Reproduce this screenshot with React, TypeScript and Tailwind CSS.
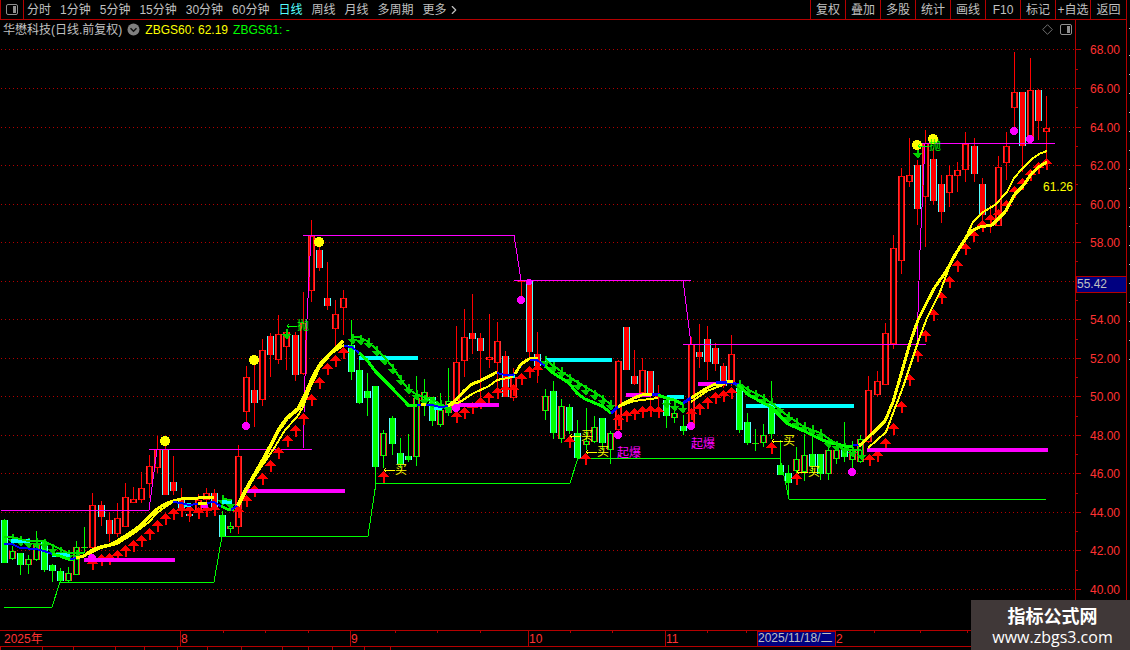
import { ChevronRight } from 'lucide-react'

type Kind = 'r' | 'c' | 'g' | 'h'
type Point = [number, number]

// high, body top, body bottom, low, kind
// r: hollow red, c: solid red, g: solid green, h: hollow green
const candles: [number, number, number, number, Kind][] = [
  [519, 520, 563, 563, 'g'], [546, 551, 559, 560, 'h'], [553, 553, 565, 575, 'g'], [555, 559, 565, 574, 'h'],
  [531, 543, 560, 561, 'h'], [540, 542, 570, 572, 'g'], [564, 565, 571, 582, 'g'], [568, 571, 581, 582, 'g'],
  [567, 573, 581, 582, 'h'], [541, 547, 575, 575, 'h'], [527, 547, 548, 553, 'h'], [493, 505, 548, 548, 'r'],
  [501, 505, 517, 526, 'c'], [512, 520, 534, 542, 'c'], [503, 518, 534, 537, 'r'], [483, 497, 527, 527, 'r'],
  [487, 499, 503, 503, 'r'], [472, 488, 500, 503, 'r'], [455, 466, 484, 498, 'r'], [436, 449, 468, 473, 'r'],
  [445, 450, 495, 495, 'c'], [456, 482, 491, 495, 'c'], [488, 499, 508, 511, 'c'], [508, 514, 516, 522, 'c'],
  [494, 500, 510, 515, 'r'], [488, 493, 500, 515, 'r'], [489, 493, 510, 513, 'c'], [511, 515, 537, 537, 'g'],
  [522, 526, 529, 533, 'h'], [445, 456, 527, 534, 'r'], [366, 377, 412, 423, 'r'], [365, 390, 403, 427, 'c'],
  [339, 350, 400, 406, 'r'], [333, 336, 355, 377, 'c'], [315, 334, 360, 364, 'r'], [330, 332, 347, 370, 'r'],
  [332, 335, 375, 381, 'c'], [292, 323, 374, 375, 'r'], [220, 236, 291, 302, 'r'], [245, 250, 268, 271, 'c'],
  [262, 298, 306, 310, 'c'], [300, 314, 329, 347, 'r'], [290, 298, 308, 335, 'r'], [320, 345, 372, 380, 'g'],
  [360, 370, 403, 404, 'g'], [373, 391, 398, 416, 'g'], [386, 386, 467, 483, 'g'], [430, 433, 456, 468, 'h'],
  [416, 418, 444, 455, 'g'], [438, 453, 464, 468, 'g'], [434, 456, 460, 462, 'g'], [376, 398, 457, 466, 'h'],
  [379, 392, 400, 416, 'h'], [397, 397, 421, 426, 'g'], [393, 410, 425, 427, 'h'], [368, 401, 413, 416, 'h'],
  [326, 362, 403, 403, 'r'], [309, 337, 361, 377, 'r'], [294, 333, 339, 354, 'c'], [333, 338, 351, 402, 'c'],
  [314, 357, 360, 368, 'r'], [322, 341, 363, 393, 'r'], [351, 356, 397, 397, 'c'], [368, 377, 398, 401, 'r'],
  [281, 281, 282, 296, 'r'], [279, 281, 352, 357, 'c'], [332, 354, 366, 383, 'c'], [389, 396, 411, 420, 'h'],
  [381, 391, 433, 439, 'g'], [399, 406, 439, 443, 'h'], [404, 407, 431, 434, 'g'], [420, 433, 458, 459, 'g'],
  [408, 441, 445, 450, 'h'], [416, 427, 442, 443, 'h'], [418, 418, 443, 450, 'g'], [431, 433, 450, 464, 'h'],
  [360, 361, 430, 433, 'r'], [327, 327, 370, 370, 'c'], [350, 376, 384, 385, 'c'], [358, 370, 393, 393, 'r'],
  [371, 371, 393, 405, 'c'], [385, 396, 398, 410, 'r'], [396, 400, 416, 428, 'g'], [407, 413, 418, 423, 'h'],
  [415, 426, 431, 435, 'g'], [337, 344, 425, 425, 'r'], [324, 352, 357, 368, 'c'], [326, 339, 362, 380, 'c'],
  [343, 348, 364, 371, 'c'], [363, 366, 386, 388, 'c'], [335, 354, 384, 386, 'r'], [385, 388, 430, 433, 'g'],
  [413, 422, 443, 445, 'g'], [429, 443, 444, 451, 'h'], [424, 435, 443, 447, 'h'], [381, 408, 434, 439, 'g'],
  [440, 465, 475, 475, 'g'], [465, 473, 483, 499, 'g'], [447, 459, 471, 473, 'h'], [434, 455, 472, 481, 'h'],
  [437, 454, 466, 473, 'g'], [454, 454, 474, 480, 'g'], [442, 450, 474, 480, 'h'], [446, 450, 459, 464, 'h'],
  [422, 449, 457, 462, 'g'], [441, 449, 460, 468, 'h'], [435, 439, 462, 463, 'h'], [376, 390, 442, 443, 'r'],
  [371, 381, 395, 397, 'r'], [323, 333, 385, 385, 'r'], [235, 248, 344, 349, 'r'], [168, 176, 261, 274, 'r'],
  [138, 175, 182, 187, 'r'], [160, 165, 209, 225, 'c'], [130, 143, 197, 247, 'r'], [148, 159, 201, 205, 'c'],
  [175, 184, 212, 223, 'c'], [165, 175, 193, 207, 'r'], [162, 170, 176, 192, 'r'], [132, 144, 170, 182, 'r'],
  [138, 146, 174, 182, 'c'], [178, 184, 215, 222, 'c'], [205, 217, 219, 233, 'r'], [156, 167, 226, 226, 'r'],
  [132, 146, 163, 180, 'r'], [52, 92, 108, 128, 'r'], [92, 92, 146, 172, 'c'], [58, 90, 139, 140, 'r'],
  [89, 90, 121, 140, 'c'], [96, 128, 132, 160, 'r'],
]

const bodyColor = { r: '#ff0000', c: '#ff0000', g: '#00ff00', h: '#00ff00' }
const edgeColor = { r: '#ff3232', c: '#54ffff', g: '#54ffff', h: '#ff3232' }

const candleX = (i: number) => Math.floor(4.08 + i * 8.083)
const priceY = (p: number) => Math.round(49.45 + (68 - p) * 19.27)

const resistance = [
  '1,510 149,510 157,449', '149,449 312,449', '303,449 306,340 311,236', '303,235 514,235 521,280',
  '514,280 691,280', '683,280 691,344', '683,344 926,344', '917,344 920,250 925,143', '917,143 1055,143',
]
const support =
  '4,607 52,607 60,582 214,582 222,536 368,536 376,483 570,483 578,458 780,458 789,499 1046,499'

const lines: { c: string; w: number; p: string }[] = [
  { c: '#00e100', w: 2, p: '4,537 12,537 20,539 28,541 44,541 52,545 60,549 68,553 84,553' },
  { c: '#0000ff', w: 2, p: '4,544 12,544 20,548 36,549 44,551 52,554' },
  { c: '#00ff00', w: 3, p: '52,554 60,556 68,559 74,559' },
  { c: '#0000ff', w: 2, p: '70,559 78,558' },
  { c: '#ffff00', w: 3, p: '76,558 84,556 92,550 100,547 109,545 117,541 133,531 141,525 149,517 157,509 165,504 173,501 181,499 198,498 214,497' },
  { c: '#ffff00', w: 2, p: '84,556 101,548 117,544 125,539 133,534 141,528 149,522 157,513 165,507 173,502' },
  { c: '#0000ff', w: 2, p: '173,502 181,503 189,505 198,504 214,502 222,507' },
  { c: '#ffff00', w: 3, p: '198,504 207,503' },
  { c: '#00e100', w: 2, p: '222,499 231,500' },
  { c: '#00ff00', w: 3, p: '221,506 227,509 234,510' },
  { c: '#0000ff', w: 2, p: '231,510 238,505' },
  { c: '#ffff00', w: 4, p: '238,506 247,488 255,474 263,460 270,447 278,431 287,418 298,409 305,396 313,377 320,365 327,357 335,349 343,341' },
  { c: '#ffff00', w: 2, p: '238,506 255,476 273,450 285,430 297,417 303,407 310,388 320,367 332,353 344,345' },
  { c: '#0000ff', w: 2, p: '344,346 352,347 359,353' },
  { c: '#00ff00', w: 3, p: '359,353 367,360 376,372 392,388 408,405 417,405' },
  { c: '#00e100', w: 2, p: '351,337 359,337 367,341 376,349 384,357 392,366 400,378 408,389 416,394 424,397 432,399 440,404 448,407' },
  { c: '#00ff00', w: 2, p: '424,398 432,402 440,406 448,407' },
  { c: '#0000ff', w: 2, p: '417,405 432,405 440,407 450,406' },
  { c: '#ffff00', w: 3, p: '421,404 426,404' },
  { c: '#ffff00', w: 3, p: '448,406 456,400 464,391 472,384 480,381 497,372' },
  { c: '#ffff00', w: 2, p: '448,406 460,402 472,394 489,386 497,380 513,377' },
  { c: '#0000ff', w: 2, p: '497,373 505,375 513,375 521,366' },
  { c: '#ffff00', w: 3, p: '515,374 521,364 529,359 538,358' },
  { c: '#0000ff', w: 2, p: '530,360 537,360 545,366' },
  { c: '#00ff00', w: 3, p: '545,366 553,373 569,383 577,393 585,399 602,406 611,413' },
  { c: '#00e100', w: 2, p: '545,359 553,366 561,371 577,382 594,392 602,397 611,405' },
  { c: '#0000ff', w: 3, p: '611,413 618,407' },
  { c: '#ffff00', w: 3, p: '618,407 626,402 634,398 642,395 652,394' },
  { c: '#ffff00', w: 2, p: '618,407 634,401 650,399 658,398' },
  { c: '#0000ff', w: 3, p: '652,394 660,394' },
  { c: '#00ff00', w: 3, p: '658,395 666,398 674,400 683,404' },
  { c: '#0000ff', w: 3, p: '683,403 691,398' },
  { c: '#ffff00', w: 3, p: '691,398 699,393 707,388 715,384 723,384 727,382' },
  { c: '#ffff00', w: 2, p: '691,402 707,391 723,385' },
  { c: '#0000ff', w: 3, p: '716,382 730,382 739,385' },
  { c: '#ffff00', w: 3, p: '727,381 733,381' },
  { c: '#00ff00', w: 3, p: '738,384 747,394 763,403 771,407 788,424 804,431 820,439 828,442 845,446 853,447' },
  { c: '#00e100', w: 2, p: '739,383 747,389 763,397 771,403 788,416 804,427 820,433 837,444 845,450 861,450' },
  { c: '#0000ff', w: 2, p: '853,445 860,445' },
  { c: '#ffff00', w: 3, p: '859,446 873,433 885,421 893,402 900,378 910,343 918,320 927,302 935,287 945,273 957,252 968,235 973,230 980,227 992,225 1005,212 1015,194 1023,186 1032,173 1040,166 1047,162' },
  { c: '#ffff00', w: 2, p: '868,448 886,432 895,408 903,387 910,366 918,342 927,318 940,292 953,257 967,235 973,222 983,212 995,205 1007,192 1014,178 1023,168 1032,159 1039,154 1047,151' },
]

// x from, x to, y, color
const bars: [number, number, number, string][] = [
  [11, 30, 541, '#00ffff'], [52, 70, 555, '#00ffff'], [84, 175, 560, '#ff00ff'], [184, 191, 505, '#00ffff'],
  [201, 208, 506, '#ff00ff'], [222, 232, 502, '#00ffff'], [246, 345, 491, '#ff00ff'], [359, 418, 358, '#00ffff'],
  [434, 442, 408, '#00ffff'], [456, 499, 405, '#ff00ff'], [508, 515, 376, '#00ffff'], [545, 612, 360, '#00ffff'],
  [626, 651, 395, '#ff00ff'], [667, 684, 397, '#00ffff'], [698, 716, 384, '#ff00ff'], [746, 854, 406, '#00ffff'],
  [867, 1048, 450, '#ff00ff'],
]

// arrow tips
const upArrows: Point[] = [
  [92, 558], [101, 554], [109, 553], [117, 550], [125, 545], [133, 540], [141, 535], [149, 528], [157, 520],
  [165, 513], [173, 508], [181, 505], [189, 505], [198, 507], [206, 505], [214, 504], [238, 506], [246, 495],
  [254, 485], [262, 473], [270, 460], [278, 447], [287, 435], [295, 425], [303, 413], [311, 394], [319, 377],
  [327, 363], [335, 355], [343, 347], [383, 471], [456, 411], [464, 407], [472, 402], [480, 397], [488, 392],
  [497, 387], [505, 384], [513, 384], [521, 373], [529, 366], [537, 364], [569, 436], [585, 453], [618, 414],
  [626, 410], [634, 408], [642, 406], [650, 405], [658, 406], [691, 408], [699, 403], [707, 397], [715, 392],
  [723, 390], [731, 387], [771, 442], [796, 473], [869, 454], [877, 450], [885, 438], [893, 423], [901, 401],
  [909, 374], [917, 350], [925, 330], [933, 309], [941, 292], [949, 276], [957, 260], [965, 243], [973, 230],
  [982, 220], [990, 214], [998, 209], [1006, 200], [1014, 186], [1022, 178], [1030, 169], [1038, 162], [1046, 158],
]
const downArrows: Point[] = [
  [12, 545], [20, 547], [28, 549], [36, 549], [44, 550], [52, 555], [60, 558], [68, 561], [76, 561], [222, 506],
  [230, 510], [286, 340], [352, 345], [360, 346], [368, 349], [376, 357], [384, 366], [392, 375], [400, 386],
  [408, 395], [416, 401], [424, 406], [432, 409], [440, 411], [448, 414], [545, 367], [553, 373], [561, 378],
  [569, 385], [577, 391], [585, 396], [594, 401], [602, 406], [610, 411], [666, 409], [674, 412], [682, 414],
  [739, 391], [747, 397], [755, 401], [763, 405], [771, 409], [779, 415], [788, 423], [796, 429], [804, 433],
  [812, 436], [820, 440], [828, 449], [836, 452], [844, 454], [852, 458], [861, 461], [917, 159],
]

const dots: [number, number, number, string][] = [
  [165, 441, 5, '#ffff00'], [254, 360, 5, '#ffff00'], [319, 242, 5, '#ffff00'], [917, 145, 5, '#ffff00'],
  [933, 139, 5, '#ffff00'], [246, 426, 4, '#ff00ff'], [521, 300, 4, '#ff00ff'], [529, 282, 3, '#ff00ff'],
  [456, 408, 4, '#ff00ff'], [92, 558, 4, '#ff00ff'], [618, 435, 4, '#ff00ff'], [691, 426, 4, '#ff00ff'],
  [852, 472, 4, '#ff00ff'], [1014, 131, 4, '#ff00ff'], [1030, 139, 4, '#ff00ff'],
]

const signals: { x: number; y: number; text: string; color: string; from?: number }[] = [
  { x: 297, y: 326, text: '抛', color: '#00ff00', from: 287 },
  { x: 929, y: 146, text: '抛', color: '#00ff00', from: 918 },
  { x: 395, y: 470, text: '买', color: '#ffff00', from: 384 },
  { x: 581, y: 436, text: '买', color: '#ffff00', from: 570 },
  { x: 597, y: 452, text: '买', color: '#ffff00', from: 586 },
  { x: 783, y: 441, text: '买', color: '#ffff00', from: 772 },
  { x: 808, y: 472, text: '买', color: '#ffff00', from: 797 },
  { x: 617, y: 453, text: '起爆', color: '#ff00ff' },
  { x: 691, y: 444, text: '起爆', color: '#ff00ff' },
]

const prices = [68, 66, 64, 62, 60, 58, 56, 54, 52, 50, 48, 46, 44, 42, 40]
const months: [number, string][] = [[180, '8'], [350, '9'], [528, '10'], [665, '11'], [828, '12']]
const weekTicks = [223, 265, 308, 395, 437, 480, 570, 612, 707, 746, 874, 920, 967, 1012, 1052]

const periods = ['分时', '1分钟', '5分钟', '15分钟', '30分钟', '60分钟', '日线', '周线', '月线', '多周期']
const tools = ['复权', '叠加', '多股', '统计', '画线', 'F10', '标记', '+自选']

function PanelIcon({ className }: { className?: string }) {
  return (
    <svg viewBox="0 0 12 11" width="12" height="11" className={className} aria-hidden="true">
      <rect x="0.5" y="0.5" width="11" height="10" rx="1.5" fill="none" stroke="currentColor" />
      <rect x="7" y="2" width="3" height="7" fill="currentColor" />
    </svg>
  )
}

function Toolbar() {
  return (
    <header className="flex h-5 items-stretch justify-between border-b border-[#b40000] text-[#c0c0c0]">
      <nav className="flex items-center gap-[9px] whitespace-nowrap">
        <button aria-label="侧栏" className="-mr-[6px] flex h-full w-6 items-center justify-center border-x border-[#b40000] text-[#909090]">
          <PanelIcon />
        </button>
        {periods.map((p) => (
          <button key={p} className={p === '日线' ? 'text-[#54ffff]' : ''}>{p}</button>
        ))}
        <button className="flex items-center">
          更多 <ChevronRight size={14} strokeWidth={2} />
        </button>
      </nav>
      <div className="flex whitespace-nowrap">
        {tools.map((t) => (
          <button key={t} className="flex w-[35px] items-center justify-center border-l border-[#b40000]">{t}</button>
        ))}
        <button className="flex w-9 items-center justify-center border-l border-[#b40000]">返回</button>
      </div>
    </header>
  )
}

function InfoBar() {
  return (
    <div className="flex h-5 items-stretch">
      <div className="flex flex-1 items-center gap-[5px] px-[3px] pb-px">
        <span className="text-[#c0c0c0]">华懋科技(日线.前复权)</span>
        <button aria-label="指标菜单">
          <svg viewBox="0 0 13 13" width="13" height="13" aria-hidden="true">
            <circle cx="6.5" cy="6.5" r="6" fill="#808080" />
            <path d="M3.5 5.2 6.5 8.2 9.5 5.2" fill="none" stroke="#101010" strokeWidth="1.5" />
          </svg>
        </button>
        <span className="text-[#ffff00]">ZBGS60: 62.19</span>
        <span className="text-[#00ff00]">ZBGS61: -</span>
        <div className="ml-auto flex items-center gap-[7px] text-[#909090]">
          <svg viewBox="0 0 11 11" width="11" height="11" aria-hidden="true">
            <path d="M5.5 0.7 10.3 5.5 5.5 10.3 0.7 5.5Z" fill="none" stroke="#707070" />
          </svg>
          <PanelIcon />
        </div>
      </div>
      <div className="w-[51px] border-l border-[#b40000]" />
    </div>
  )
}

function Chart() {
  return (
    <svg viewBox="0 40 1126 607" className="block h-auto w-full text-xs" role="img" aria-label="华懋科技 日线">
      <g shapeRendering="crispEdges" fill="none">
        {prices.map((p) => (
          <g key={p} stroke="#b40000">
            <line x1="1" x2="1075" y1={priceY(p)} y2={priceY(p)} strokeDasharray="1 3" />
            <line x1="1075" x2="1081" y1={priceY(p)} y2={priceY(p)} />
            {p > 40 && <line x1="1075" x2="1078" y1={priceY(p - 1)} y2={priceY(p - 1)} />}
          </g>
        ))}
        <path d="M1075 40V630M0 630H1126M0 646H1126" stroke="#b40000" />
        {months.map(([x]) => <line key={x} x1={x} x2={x} y1="630" y2="646" stroke="#b40000" />)}
        {weekTicks.map((x) => <line key={x} x1={x} x2={x} y1="630" y2="633" stroke="#b40000" />)}

        {candles.map(([high, top, bottom, low, kind], i) => {
          const x = candleX(i)
          const h = Math.max(bottom - top, 1)
          const solid = kind === 'c' || kind === 'g'
          return (
            <g key={i}>
              <rect x={x} y={high} width="1" height={low - high} fill={bodyColor[kind]} />
              <rect x={x - 3} y={top} width="7" height={h} fill={edgeColor[kind]} />
              <rect x={x - 2} y={top} width="5" height={h} fill={bodyColor[kind]} />
              {!solid && h > 2 && <rect x={x - 1} y={top + 1} width="3" height={h - 2} fill="#000000" />}
            </g>
          )
        })}

        {resistance.map((p) => <polyline key={p} points={p} stroke="#ff00ff" />)}
        <polyline points={support} stroke="#00ff00" />

        {downArrows.map(([x, y]) => (
          <path key={x} d={`M${x - 4} ${y - 6}H${x}V${y - 11}H${x + 2}V${y - 6}H${x + 5}L${x + 1} ${y}Z`} fill="#00d200" />
        ))}
        {upArrows.map(([x, y]) => (
          <path key={x} d={`M${x} ${y}H${x + 1}L${x + 6} ${y + 6}H${x + 2}V${y + 12}H${x}V${y + 6}H${x - 5}Z`} fill="#ff0000" />
        ))}
        {bars.map(([x1, x2, y, c]) => <rect key={x1} x={x1} y={y - 2} width={x2 - x1} height="4" fill={c} />)}
        {lines.map((l) => <polyline key={l.p} points={l.p} stroke={l.c} strokeWidth={l.w} />)}
        {dots.map(([x, y, r, c]) => <circle key={x} cx={x} cy={y} r={r} fill={c} />)}
        {signals.map((s) => s.from && (
          <path
            key={s.x}
            d={`M${s.x} ${s.y}H${s.from}M${s.from + 2} ${s.y - 2}L${s.from} ${s.y}L${s.from + 2} ${s.y + 2}`}
            stroke={s.color}
          />
        ))}
        <rect x="1076" y="276" width="50" height="16" fill="#000080" stroke="#b40000" />
        <rect x="757" y="631" width="78" height="15" fill="#000080" stroke="#b40000" />
      </g>

      {signals.map((s) => <text key={s.x} x={s.x} y={s.y + 4} fill={s.color}>{s.text}</text>)}
      {prices.filter((p) => p !== 56).map((p) => (
        <text key={p} x="1120" y={priceY(p) + 5} textAnchor="end" fill="#ff3232">{p.toFixed(2)}</text>
      ))}
      <text x="1043" y="191" fill="#ffff00">61.26</text>
      <text x="1077" y="288" fill="#c0c0c0">55.42</text>
      <text x="4" y="643" fill="#ff3232">2025年</text>
      {months.slice(0, 4).map(([x, m]) => <text key={m} x={x + 1} y="643" fill="#ff3232">{m}</text>)}
      <text x="836" y="643" fill="#ff3232">2</text>
      <text x="758" y="642" fill="#c0c0c0">2025/11/18/二</text>
    </svg>
  )
}

const tabWidths = [42, 31, 42, 29, 33, 30, 34, 41, 26, 24, 32, 26]
const edgeMarks = ['mt-[28px]', 'mt-[26px]', 'mt-[18px]', 'mt-[18px]', 'mt-[18px]', 'mt-[18px]', 'mt-[18px]', 'mt-[18px]', 'mt-[18px]', 'mt-[18px]', 'mt-[18px]', 'mt-[18px]', 'mt-[18px]', 'mt-[18px]', 'mt-[18px]', 'mt-[18px]', 'mt-[18px]', 'mt-[18px]']

export default function App() {
  return (
    <div className="relative flex min-h-screen overflow-hidden bg-black font-['Liberation_Sans','Noto_Sans_CJK_SC',sans-serif] text-xs">
      <main className="min-w-0 flex-1">
        <Toolbar />
        <InfoBar />
        <Chart />
        <div className="flex h-[3px]">
          {tabWidths.map((w, i) => (
            <div key={i} className="shrink-0 border-l border-[#b40000]" style={{ width: w }} />
          ))}
          <div className="flex-1 border-l border-[#b40000]" />
        </div>
      </main>
      <aside className="w-1 shrink-0 border-l border-[#b40000]">
        {edgeMarks.map((m, i) => <div key={i} className={`ml-[2px] h-px bg-[#c0c0c0] ${m}`} />)}
      </aside>
      <footer className="absolute bottom-0 right-0 flex h-[50px] w-[159px] flex-col items-center justify-center bg-[#403838] pl-1 text-white">
        <strong className="text-lg leading-6">指标公式网</strong>
        <a href="#" className="font-['Open_Sans',sans-serif] text-base leading-4">www.zbgs3.com</a>
      </footer>
    </div>
  )
}
